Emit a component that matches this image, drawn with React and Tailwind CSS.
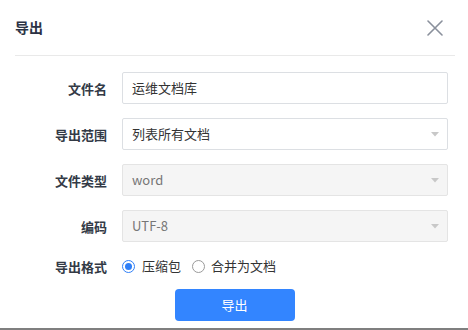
export default function App() {
  const font = { fontFamily: '"Noto Sans CJK SC", "Noto Sans", sans-serif' };
  const Arrow = () => (
    <svg width="8" height="5" viewBox="0 0 8 5" className="shrink-0">
      <path d="M0 0 L8 0 L4 4.5 Z" fill="#c8c8c8" />
    </svg>
  );
  const Label = ({ children }) => (
    <div className="w-[92px] text-right text-[13px] font-semibold text-[#333a46] leading-none">{children}</div>
  );
  return (
    <div className="w-[468px] h-[330px] bg-white flex flex-col" style={font}>
      <div className="h-[56px] ml-[15px] mr-[13px] border-b border-[#e9e9e9] flex items-center justify-between">
        <div className="text-[14px] font-bold text-[#2b3245]">导出</div>
        <svg width="16" height="16" viewBox="0 0 16 16" className="mr-[12px]">
          <path d="M1 1 L15 15 M15 1 L1 15" stroke="#8a909c" strokeWidth="1.6" strokeLinecap="round" />
        </svg>
      </div>
      <div className="flex flex-col gap-[14px] mt-[16px] pl-[15px]">
        <div className="flex items-center gap-[15px] h-[32px]">
          <Label>文件名</Label>
          <div className="w-[326px] h-[32px] border border-[#dcdfe3] rounded-[2px] flex items-center px-[9px] text-[13px] text-[#333]">运维文档库</div>
        </div>
        <div className="flex items-center gap-[15px] h-[32px]">
          <Label>导出范围</Label>
          <div className="w-[326px] h-[32px] border border-[#dcdfe3] rounded-[2px] flex items-center justify-between pl-[9px] pr-[8px] text-[13px] text-[#333]">
            <span>列表所有文档</span>
            <Arrow />
          </div>
        </div>
        <div className="flex items-center gap-[15px] h-[32px]">
          <Label>文件类型</Label>
          <div className="w-[326px] h-[32px] border border-[#e4e4e4] bg-[#f5f5f5] rounded-[2px] flex items-center justify-between pl-[9px] pr-[8px] text-[13px] text-[#777]">
            <span>word</span>
            <Arrow />
          </div>
        </div>
        <div className="flex items-center gap-[15px] h-[32px]">
          <Label>编码</Label>
          <div className="w-[326px] h-[32px] border border-[#e4e4e4] bg-[#f5f5f5] rounded-[2px] flex items-center justify-between pl-[9px] pr-[8px] text-[13px] text-[#777]">
            <span>UTF-8</span>
            <Arrow />
          </div>
        </div>
        <div className="flex items-center gap-[15px] h-[20px]">
          <Label>导出格式</Label>
          <div className="flex items-center text-[13px] text-[#333]">
            <span className="w-[13px] h-[13px] rounded-full border border-[#2f7ff7] flex items-center justify-center">
              <span className="w-[7px] h-[7px] rounded-full bg-[#2f7ff7]" />
            </span>
            <span className="ml-[7px]">压缩包</span>
            <span className="ml-[11px] w-[13px] h-[13px] rounded-full border border-[#9a9a9a]" />
            <span className="ml-[6px]">合并为文档</span>
          </div>
        </div>
      </div>
      <div className="flex justify-center mt-[13px]">
        <button className="w-[120px] h-[32px] rounded-[4px] bg-[#3385ff] text-white text-[13px] ml-[1px]">导出</button>
      </div>
      <div className="flex-1" />
      <div className="h-[2px] bg-[#7f7f7f]" />
    </div>
  );
}
